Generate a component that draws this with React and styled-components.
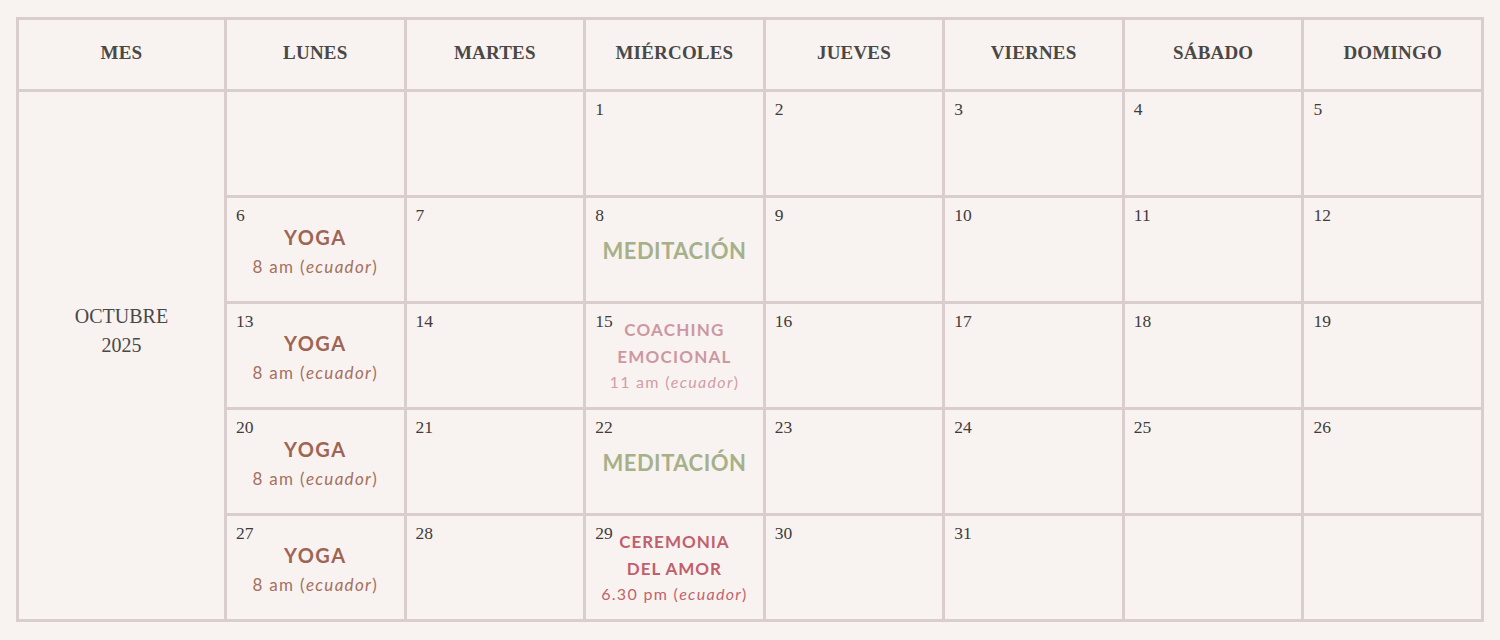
import styled, { createGlobalStyle } from 'styled-components';

const GlobalStyle = createGlobalStyle`
	html, body {
		margin: 0;
		padding: 0;
		background: #f8f3f0;
	}
`;

const Page = styled.div`
	padding: 17px 0 0 16px;
	width: 1500px;
	height: 640px;
	box-sizing: border-box;
	background: #f8f3f0;
`;

const Grid = styled.div`
	display: grid;
	grid-template-columns: 208px repeat(7, 1fr);
	grid-template-rows: 72px repeat(5, 106px);
	width: 1465px;
	box-sizing: content-box;
	border-left: 3px solid #dacdcd;
	border-top: 3px solid #dacdcd;
`;

const Cell = styled.div`
	border-right: 3px solid #dacdcd;
	border-bottom: 3px solid #dacdcd;
	min-width: 0;
`;

const HeadCell = styled(Cell)`
	display: flex;
	align-items: center;
	justify-content: center;
	padding-bottom: 3px;
	font-family: 'Liberation Serif', 'DejaVu Serif', serif;
	font-weight: 700;
	font-size: 19px;
	color: #4a4847;
	letter-spacing: 0.2px;
`;

const MonthCell = styled(Cell)`
	grid-row: span 5;
	display: flex;
	align-items: center;
	justify-content: center;
	text-align: center;
	font-family: 'Liberation Serif', 'DejaVu Serif', serif;
	font-size: 20px;
	line-height: 29px;
	color: #4a4847;
	padding-bottom: 50px;
`;

const DayCell = styled(Cell)`
	display: grid;
	grid-template-areas: 'stack';
`;

const Num = styled.span`
	grid-area: stack;
	align-self: start;
	justify-self: start;
	margin: 7px 0 0 9px;
	font-family: 'Liberation Serif', 'DejaVu Serif', serif;
	font-size: 17.5px;
	color: #3f3c3b;
`;

const Event = styled.div`
	grid-area: stack;
	align-self: center;
	justify-self: center;
	text-align: center;
	font-family: Lato, 'Open Sans', sans-serif;
	color: ${p => p.$color};
	margin-top: ${p => p.$shift || 0}px;
`;

const Title = styled.div`
	font-weight: 700;
	font-size: ${p => p.$size}px;
	line-height: ${p => p.$lh}px;
	letter-spacing: ${p => p.$ls}px;
`;

const Time = styled.div`
	font-size: ${p => p.$size}px;
	line-height: ${p => p.$lh}px;
	color: ${p => p.$color};
	font-weight: 400;
	letter-spacing: 1.3px;

	& em {
		font-style: italic;
	}
`;

const days = ['LUNES', 'MARTES', 'MIÉRCOLES', 'JUEVES', 'VIERNES', 'SÁBADO', 'DOMINGO'];

const yoga = (
	<Event $color="#9d6552" $shift={6}>
		<Title $size={20} $lh={28} $ls={1.5}>YOGA</Title>
		<Time $size={17} $lh={32} $color="#a5705e">
			8 am (<em>ecuador</em>)
		</Time>
	</Event>
);

const meditacion = (
	<Event $color="#a6b089" $shift={2}>
		<Title $size={22} $lh={30} $ls={0.5}>MEDITACIÓN</Title>
	</Event>
);

const events = {
	6: yoga,
	13: yoga,
	20: yoga,
	27: yoga,
	8: meditacion,
	22: meditacion,
	15: (
		<Event $color="#cd97a1" $shift={-2}>
			<Title $size={17} $lh={27} $ls={1.2}>
				COACHING
				<br />
				EMOCIONAL
			</Title>
			<Time $size={16} $lh={24} $color="#d09ea7">
				11 am (<em>ecuador</em>)
			</Time>
		</Event>
	),
	29: (
		<Event $color="#c0606c" $shift={-2}>
			<Title $size={17} $lh={27} $ls={1}>
				CEREMONIA
				<br />
				DEL AMOR
			</Title>
			<Time $size={16} $lh={24} $color="#c2636e">
				6.30 pm (<em>ecuador</em>)
			</Time>
		</Event>
	),
};

const cells = [];
for (let i = 0; i < 35; i++) {
	const d = i - 1;
	cells.push(d >= 1 && d <= 31 ? d : null);
}

export default function App() {
	return (
		<Page>
			<GlobalStyle />
			<Grid>
				<HeadCell>MES</HeadCell>
				{days.map(d => (
					<HeadCell key={d}>{d}</HeadCell>
				))}
				<MonthCell>
					OCTUBRE
					<br />
					2025
				</MonthCell>
				{cells.map((d, i) => (
					<DayCell key={i}>
						{d && <Num>{d}</Num>}
						{d && events[d]}
					</DayCell>
				))}
			</Grid>
		</Page>
	);
}
